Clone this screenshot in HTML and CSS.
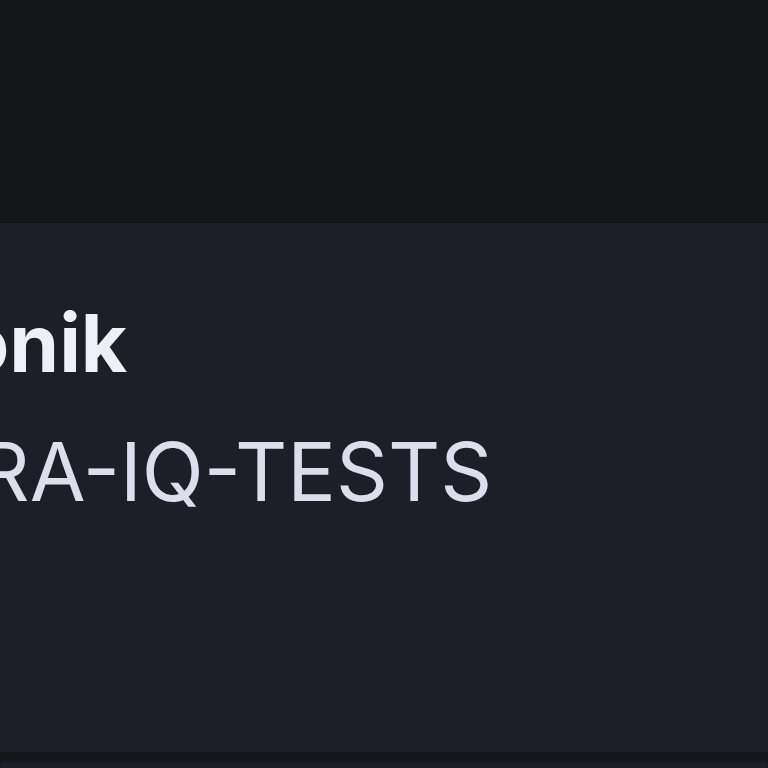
FILE: index.html
```html
<!DOCTYPE html>
<html lang="de">
<head>
    <meta charset="UTF-8">
    <title>Elektronik - ULTRA-IQ-TESTS</title>
    <link rel="stylesheet" href="styles.css">
</head>
<body>
    <header class="topbar"></header>

    <section class="card">
        <div class="card-body">
            <h2 class="card-title">Elektronik</h2>
            <p class="card-code">ULTRA-IQ-TESTS</p>
        </div>
    </section>

    <section class="card card-next"></section>
</body>
</html>
```

FILE: styles.css
```css
html, body {
    margin: 0;
    padding: 0;
    height: 100%;
    overflow: hidden;
}
body {
    background: #131519;
    color: #eceef5;
    font-family: Inter, "Noto Sans", sans-serif;
}
.topbar {
    height: 223px;
    background: #131519;
}
.card {
    background: #1c1f27;
    height: 529px;
    overflow: hidden;
}
.card-body {
    padding-top: 70px;
}
.card-title {
    margin: 0 0 0 -264px;
    font-size: 80px;
    font-weight: 700;
    line-height: 100px;
    color: #eef0f7;
    white-space: nowrap;
}
.card-code {
    margin: 29px 0 0 -173px;
    font-size: 81px;
    font-weight: 400;
    line-height: 100px;
    color: #dcdfea;
    white-space: nowrap;
}
.card-next {
    height: 100px;
    margin-top: 6px;
    box-shadow: inset 0 3px 3px rgba(0, 0, 0, 0.35);
}
```
